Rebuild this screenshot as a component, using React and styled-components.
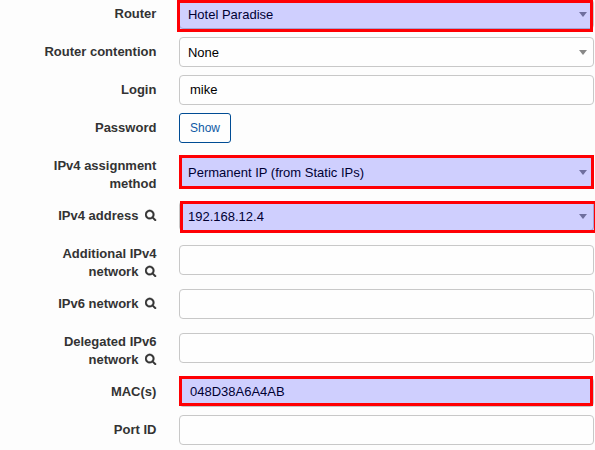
import React from "react";
import styled, { createGlobalStyle } from "styled-components";

const GlobalStyle = createGlobalStyle`
  * { box-sizing: border-box; }
  html, body { margin: 0; background: #fdfdfd; overflow: hidden; }
`;

const Form = styled.form`
  display: flex;
  flex-direction: column;
  gap: 8px;
  width: 595px;
  height: 451px;
  margin-top: -1px;
  background: #fdfdfd;
  font: 13px/18px "Liberation Sans", Arial, sans-serif;
  color: #333;
`;

const Row = styled.div`
  display: grid;
  grid-template-columns: 156.4px 415px;
  column-gap: 22.6px;
  align-items: center;
  flex: none;
  height: ${(p) => (p.$lines === 2 ? 42 : 30)}px;
`;

const Label = styled.label`
  align-self: start;
  padding-top: 6px;
  font-weight: 700;
  text-align: right;
  white-space: nowrap;
`;

const LabelLine = styled.span`
  display: flex;
  justify-content: flex-end;
  align-items: center;
`;

const SearchIcon = styled.svg`
  width: 12px;
  height: 12px;
  margin: -3px -0.6px 0 6.6px;
  fill: #333;
  stroke: #333;
  stroke-width: 50;
`;

const Field = styled.div`
  position: relative;
  display: flex;
  align-items: center;
  justify-content: space-between;
  height: 30px;
  padding: ${(p) => (p.$select ? "2px 6px 0 8px" : "0 10px")};
  border: 1px solid #c8c8c8;
  border-radius: 4px;
  background: #fefefe;
  color: #000;
`;

const Caret = styled.span`
  width: 0;
  height: 0;
  border: 4px solid transparent;
  border-top: 5px solid #888;
  border-bottom: 0;
  margin-top: -2px;
`;

const Highlight = styled.span`
  position: absolute;
  top: ${(p) => p.$top}px;
  left: ${(p) => p.$left}px;
  width: ${(p) => p.$width}px;
  height: ${(p) => p.$height}px;
  border: 3px solid #ff0004;
  background: rgba(0, 0, 255, 0.184);
  background-clip: padding-box;
  pointer-events: none;
`;

const ShowButton = styled.button`
  width: 52px;
  height: 30px;
  padding: 0;
  border: 1px solid #004c94;
  border-radius: 3px;
  background: #fefefe;
  color: #1059a5;
  font: 12px/18px "Liberation Sans", Arial, sans-serif;
`;

const rows = [
  { label: ["Router"], value: "Hotel Paradise", select: true, mark: [0, -3, 416, 32] },
  { label: ["Router contention"], value: "None", select: true },
  { label: ["Login"], value: "mike" },
  { label: ["Password"], button: "Show" },
  { label: ["IPv4 assignment", "method"], value: "Permanent IP (from Static IPs)", select: true, mark: [-3, -1, 415, 34] },
  { label: ["IPv4 address"], value: "192.168.12.4", select: true, search: true, mark: [-1, 0, 417, 32] },
  { label: ["Additional IPv4", "network"], search: true },
  { label: ["IPv6 network"], search: true },
  { label: ["Delegated IPv6", "network"], search: true },
  { label: ["MAC(s)"], value: "048D38A6A4AB", mark: [-2, -1, 414, 30] },
  { label: ["Port ID"] },
];

function Search() {
  return (
    <SearchIcon viewBox="0 0 1792 1792" aria-hidden="true">
      <path d="M1152 832q0-185-131.5-316.5t-316.5-131.5-316.5 131.5-131.5 316.5 131.5 316.5 316.5 131.5 316.5-131.5 131.5-316.5zm512 832q0 54-38 90t-90 38q-54 0-90-38l-343-342q-179 124-399 124-143 0-273.5-55.5t-225-150-150-225-55.5-273.5 55.5-273.5 150-225 225-150 273.5-55.5 273.5 55.5 225 150 150 225 55.5 273.5q0 220-124 399l343 343q37 37 37 90z" />
    </SearchIcon>
  );
}

export default function App() {
  return (
    <>
      <GlobalStyle />
      <Form>
        {rows.map((row) => (
          <Row key={row.label[0]} $lines={row.label.length}>
            <Label>
              {row.label.map((text, i) => (
                <LabelLine key={text}>
                  {text}
                  {row.search && i === row.label.length - 1 && <Search />}
                </LabelLine>
              ))}
            </Label>
            {row.button ? (
              <ShowButton type="button">{row.button}</ShowButton>
            ) : (
              <Field $select={row.select}>
                <span>{row.value}</span>
                {row.select && <Caret />}
                {row.mark && (
                  <Highlight $top={row.mark[0]} $left={row.mark[1]} $width={row.mark[2]} $height={row.mark[3]} />
                )}
              </Field>
            )}
          </Row>
        ))}
      </Form>
    </>
  );
}
